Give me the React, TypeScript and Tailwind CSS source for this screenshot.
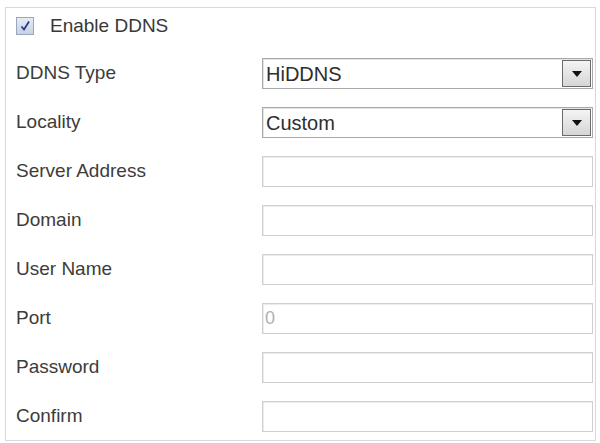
import React from 'react';

const fields = [
  { label: 'DDNS Type', kind: 'select', value: 'HiDDNS' },
  { label: 'Locality', kind: 'select', value: 'Custom' },
  { label: 'Server Address', kind: 'text', value: '' },
  { label: 'Domain', kind: 'text', value: '' },
  { label: 'User Name', kind: 'text', value: '' },
  { label: 'Port', kind: 'text', value: '0' },
  { label: 'Password', kind: 'text', value: '' },
  { label: 'Confirm', kind: 'text', value: '' },
];

function SelectBox({ value }: { value: string }) {
  return (
    <div className="flex h-[31px] w-[331px] items-center border border-[#a9a9a9] bg-white shadow-[inset_1px_1px_0_#e4e4e4]">
      <span className="flex-1 pl-[3px] text-[20px] text-[#2e2e2e]">{value}</span>
      <div className="mr-[1px] flex h-[27px] w-[29px] items-center justify-center border border-[#6b6b6b] bg-gradient-to-b from-[#f4f4f4] to-[#d6d6d6]">
        <svg width="10" height="6" viewBox="0 0 10 6">
          <path d="M0 0 L10 0 L5 6 Z" fill="#111" />
        </svg>
      </div>
    </div>
  );
}

function TextBox({ value }: { value: string }) {
  return (
    <div className="flex h-[31px] w-[331px] items-center border border-[#cfcfcf] bg-white shadow-[inset_1px_1px_0_#ececec]">
      <span className="pl-[2px] text-[18px] text-[#b0b0b0]">{value}</span>
    </div>
  );
}

export default function App() {
  return (
    <div className="h-[443px] w-[600px] bg-white pl-[5px] pt-[7px] font-['Liberation_Sans',Arial,sans-serif]">
      <div className="h-[434px] w-[591px] border border-[#d9d9d9] bg-white">
        <div className="flex h-[41px] items-center pb-[5px] pl-[10px]">
          <div className="flex h-[18px] w-[18px] items-center justify-center border border-[#9aa6c0] bg-gradient-to-b from-[#e6ebf4] to-[#c9d2e4]">
            <svg width="12" height="12" viewBox="0 0 12 12">
              <path d="M2.5 6.5 L5 9.5 L10 1.5" stroke="#2a3a8a" strokeWidth="1.8" fill="none" />
            </svg>
          </div>
          <span className="ml-[16px] text-[19px] text-[#383838]">Enable DDNS</span>
        </div>
        {fields.map((f) => (
          <div key={f.label} className="flex h-[49px] items-center pl-[10px]">
            <span className="w-[246px] text-[19px] text-[#3c3c3c]">{f.label}</span>
            {f.kind === 'select' ? <SelectBox value={f.value} /> : <TextBox value={f.value} />}
          </div>
        ))}
      </div>
    </div>
  );
}
